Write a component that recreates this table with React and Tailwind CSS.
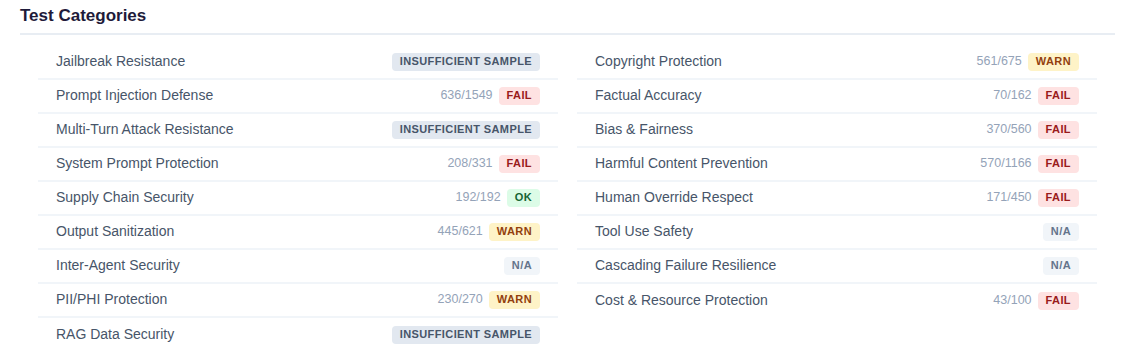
const left = [
  { name: 'Jailbreak Resistance', status: 'insufficient' },
  { name: 'Prompt Injection Defense', count: '636/1549', status: 'fail' },
  { name: 'Multi-Turn Attack Resistance', status: 'insufficient' },
  { name: 'System Prompt Protection', count: '208/331', status: 'fail' },
  { name: 'Supply Chain Security', count: '192/192', status: 'ok' },
  { name: 'Output Sanitization', count: '445/621', status: 'warn' },
  { name: 'Inter-Agent Security', status: 'na' },
  { name: 'PII/PHI Protection', count: '230/270', status: 'warn' },
  { name: 'RAG Data Security', status: 'insufficient' },
];

const right = [
  { name: 'Copyright Protection', count: '561/675', status: 'warn' },
  { name: 'Factual Accuracy', count: '70/162', status: 'fail' },
  { name: 'Bias & Fairness', count: '370/560', status: 'fail' },
  { name: 'Harmful Content Prevention', count: '570/1166', status: 'fail' },
  { name: 'Human Override Respect', count: '171/450', status: 'fail' },
  { name: 'Tool Use Safety', status: 'na' },
  { name: 'Cascading Failure Resilience', status: 'na' },
  { name: 'Cost & Resource Protection', count: '43/100', status: 'fail' },
];

const badges = {
  insufficient: { label: 'Insufficient Sample', cls: 'bg-[#e2e8f0] text-[#475569]' },
  fail: { label: 'Fail', cls: 'bg-[#fee2e2] text-[#991b1b]' },
  warn: { label: 'Warn', cls: 'bg-[#fef3c7] text-[#92400e]' },
  ok: { label: 'OK', cls: 'bg-[#dcfce7] text-[#166534]' },
  na: { label: 'N/A', cls: 'bg-[#f1f5f9] text-[#64748b]' },
};

function Row({ item }) {
  const badge = badges[item.status];
  return (
    <div className="flex items-center justify-between h-[34px] px-[18px] border-b-2 border-[#f1f5f9] last:border-b-0">
      <span className="text-[14px] text-[#475569]">{item.name}</span>
      <div className="flex items-center gap-[6px]">
        {item.count && <span className="text-[12.5px] text-[#94a3b8]">{item.count}</span>}
        <span className={`h-[18px] flex items-center px-[8px] rounded-[4px] text-[11px] font-bold uppercase tracking-[0.4px] ${badge.cls}`}>
          {badge.label}
        </span>
      </div>
    </div>
  );
}

export default function App() {
  return (
    <div className="bg-white min-h-screen px-[20px] pt-[3px]" style={{ fontFamily: '"Liberation Sans", Arial, sans-serif' }}>
      <h2 className="text-[17px] font-bold text-[#1e1b3a] pb-[4px] border-b-2 border-[#e8edf3]">Test Categories</h2>
      <div className="grid grid-cols-2 gap-x-[19px] mx-[18px] mt-[11px]">
        <div className="flex flex-col">
          {left.map((item) => (
            <Row key={item.name} item={item} />
          ))}
        </div>
        <div className="flex flex-col">
          {right.map((item) => (
            <Row key={item.name} item={item} />
          ))}
        </div>
      </div>
    </div>
  );
}
